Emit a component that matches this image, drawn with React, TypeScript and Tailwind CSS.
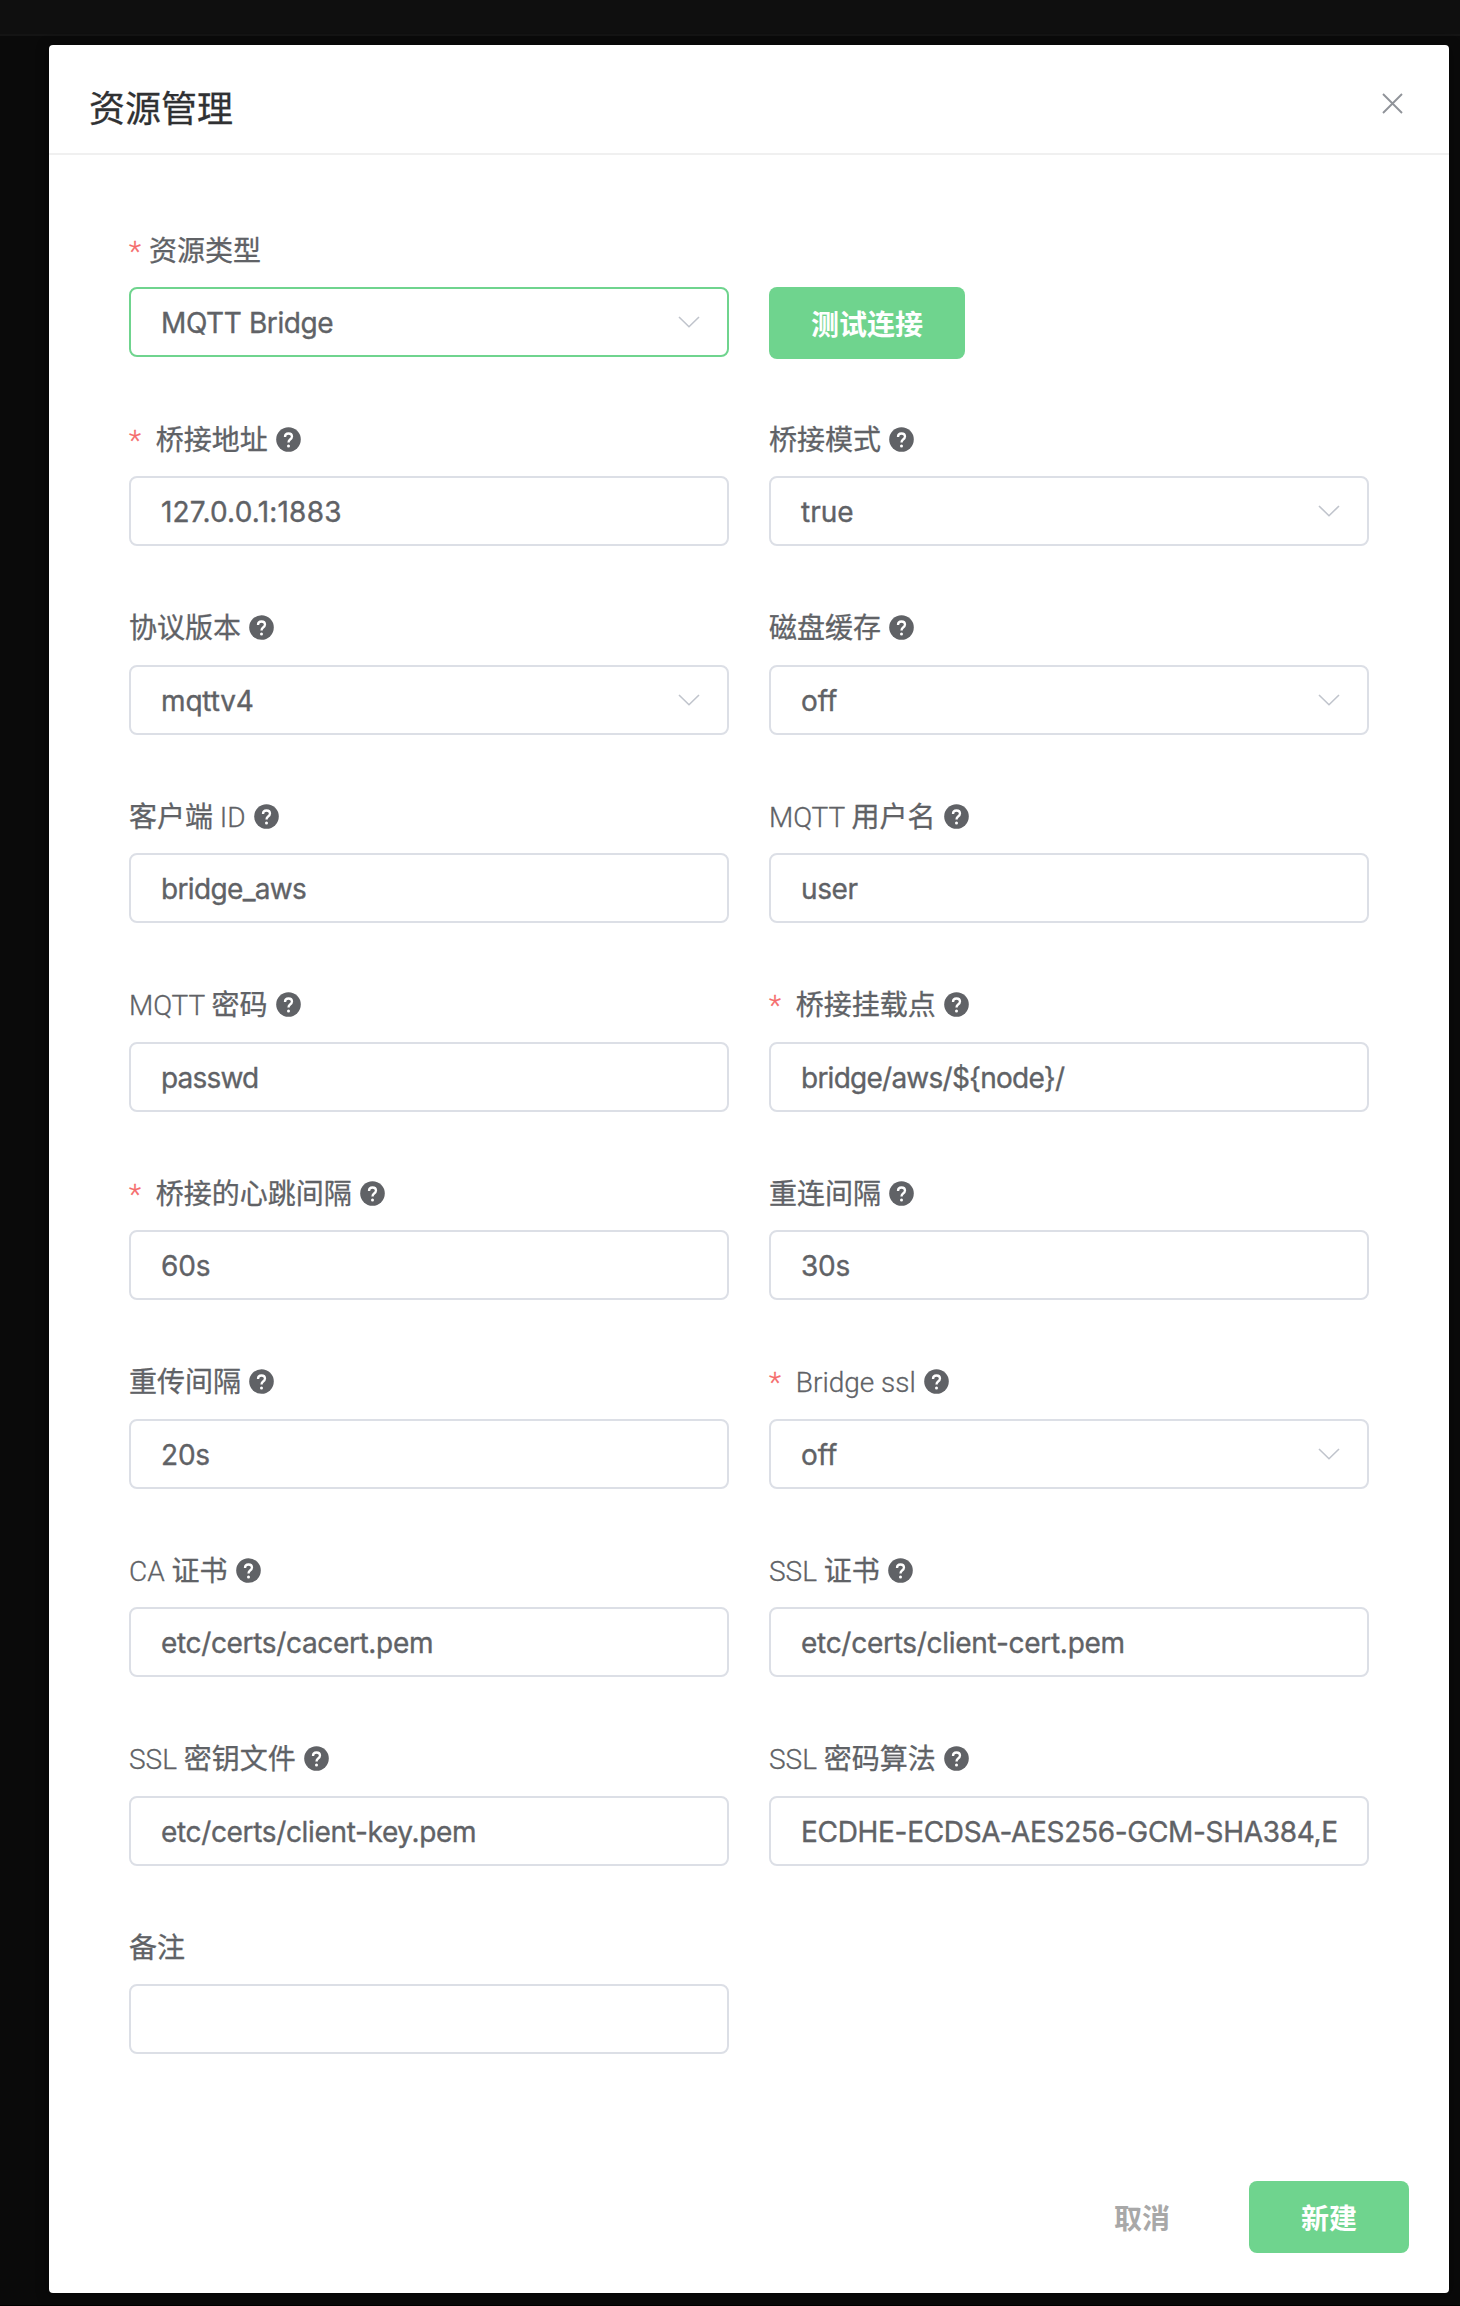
type FieldProps = {
  label: string;
  value: string;
  required?: boolean;
  select?: boolean;
  active?: boolean;
  help?: boolean;
  tracking?: string;
};

function HelpIcon() {
  return (
    <svg className="ml-[1.5px] size-[25px] shrink-0" viewBox="0 0 25 25" fill="none">
      <circle cx="12.5" cy="12.5" r="12.3" fill="#606266" />
      <path d="M9 9.9C9 7.8 10.5 6.5 12.5 6.5s3.5 1.2 3.5 3.1c0 1.4-.8 2.1-1.9 2.9-1.1.8-1.6 1.3-1.6 2.9" stroke="#fff" strokeWidth="2.3" />
      <circle cx="12.5" cy="18.9" r="1.5" fill="#fff" />
    </svg>
  );
}

function Chevron() {
  return (
    <svg className="h-[12px] w-[22px] shrink-0" viewBox="0 0 22 12" fill="none">
      <path d="M1 1l10 9.7L21 1" stroke="#c0c4cc" strokeWidth="1.6" />
    </svg>
  );
}

/* Latin runs are set light, Chinese runs regular. */
function LabelText({ text }: { text: string }) {
  return (
    <>
      {text.split(/([\u4e00-\u9fff]+)/).filter(Boolean).map((run, i) => (
        <span key={i} className={/[\u4e00-\u9fff]/.test(run) ? "font-normal" : "font-light"}>
          {run}
        </span>
      ))}
    </>
  );
}

function Field({ label, value, required, select, active, help = true, tracking = "" }: FieldProps) {
  return (
    <div className="flex w-[600px] flex-col">
      <div className="flex h-[40px] items-center whitespace-pre font-['Roboto','Noto_Sans_CJK_SC',sans-serif] text-[28px] leading-[40px] text-[#606266]">
        <div className="flex pt-[3px] [-webkit-text-stroke:0.3px_currentColor]">
          {required && <span className="w-[20px] font-light text-[#f56c6c]">*</span>}
          <LabelText text={(required && help ? " " : "") + label + (help ? " " : "")} />
        </div>
        {help && <HelpIcon />}
      </div>
      <div
        className={`mt-[17px] flex h-[70px] items-center justify-between rounded-lg border-2 bg-white pr-[27px] pl-[30px] font-['Inter',sans-serif] text-[28px] leading-[40px] text-[#606266] ${active ? "border-[#6fd48e]" : "border-[#dcdfe6]"}`}
      >
        <span className={`pt-[2px] whitespace-nowrap [-webkit-text-stroke:0.35px_currentColor] ${tracking}`}>{value}</span>
        {select && <Chevron />}
      </div>
    </div>
  );
}

const rows: FieldProps[][] = [
  [
    { label: "桥接地址", value: "127.0.0.1:1883", required: true, tracking: "tracking-[0.2px]" },
    { label: "桥接模式", value: "true", select: true },
  ],
  [
    { label: "协议版本", value: "mqttv4", select: true, tracking: "tracking-[-0.15px]" },
    { label: "磁盘缓存", value: "off", select: true },
  ],
  [
    { label: "客户端 ID", value: "bridge_aws", tracking: "tracking-[-0.65px]" },
    { label: "MQTT 用户名", value: "user", tracking: "tracking-[-0.4px]" },
  ],
  [
    { label: "MQTT 密码", value: "passwd", tracking: "tracking-[-0.8px]" },
    { label: "桥接挂载点", value: "bridge/aws/${node}/", required: true, tracking: "tracking-[-0.75px]" },
  ],
  [
    { label: "桥接的心跳间隔", value: "60s", required: true, tracking: "tracking-[-0.2px]" },
    { label: "重连间隔", value: "30s", tracking: "tracking-[-0.2px]" },
  ],
  [
    { label: "重传间隔", value: "20s", tracking: "tracking-[-0.2px]" },
    { label: "Bridge ssl", value: "off", required: true, select: true },
  ],
  [
    { label: "CA 证书", value: "etc/certs/cacert.pem", tracking: "tracking-[-0.34px]" },
    { label: "SSL 证书", value: "etc/certs/client-cert.pem", tracking: "tracking-[-0.28px]" },
  ],
  [
    { label: "SSL 密钥文件", value: "etc/certs/client-key.pem", tracking: "tracking-[-0.34px]" },
    { label: "SSL 密码算法", value: "ECDHE-ECDSA-AES256-GCM-SHA384,E", tracking: "tracking-[-0.31px]" },
  ],
];

export default function App() {
  return (
    <div className="flex h-[2306px] w-[1460px] flex-col border-b border-black bg-[#0a0a0a] font-['Noto_Sans_CJK_SC',sans-serif]">
      <div className="h-[36px] shrink-0 border-b-2 border-[#141414] bg-[#0f0f0f]" />
      <div className="mt-[9px] ml-[49px] flex h-[2248px] w-[1400px] flex-col rounded bg-white shadow-[0_2px_12px_rgba(0,0,0,0.5)]">
        <header className="flex h-[110px] shrink-0 items-center justify-between border-b-2 border-[#f0f0f0] pr-[46px] pl-[40px]">
          <h1 className="mt-[13px] text-[36px] leading-[48px] text-[#303133] [-webkit-text-stroke:0.3px_currentColor]">资源管理</h1>
          <svg className="mt-[9px] size-[21px]" viewBox="0 0 21 21" fill="none">
            <path d="M1 1l19 19M20 1L1 20" stroke="#909399" strokeWidth="1.9" />
          </svg>
        </header>
        <main className="flex flex-col px-[80px] pt-[75px]">
          <div className="flex h-[189px] items-start gap-[40px]">
            <Field label="资源类型" value="MQTT Bridge" required select active help={false} tracking="tracking-[-0.4px]" />
            <button className="mt-[57px] h-[72px] w-[196px] rounded-lg bg-[#6fd48e] text-[28px] leading-[40px] font-bold text-white">测试连接</button>
          </div>
          {rows.map((row) => (
            <div key={row[0].label} className="flex h-[188.5px] items-start gap-[40px]">
              {row.map((f) => (
                <Field key={f.label} {...f} />
              ))}
            </div>
          ))}
          <Field label="备注" value="" help={false} />
        </main>
        <footer className="mt-auto mb-[40px] flex items-center justify-end gap-[79px] pr-[40px] text-[28px] leading-[40px] font-bold">
          <button className="text-[#a8a8a8]">取消</button>
          <button className="h-[72px] w-[160px] rounded-lg bg-[#6fd48e] text-white">新建</button>
        </footer>
      </div>
    </div>
  );
}
